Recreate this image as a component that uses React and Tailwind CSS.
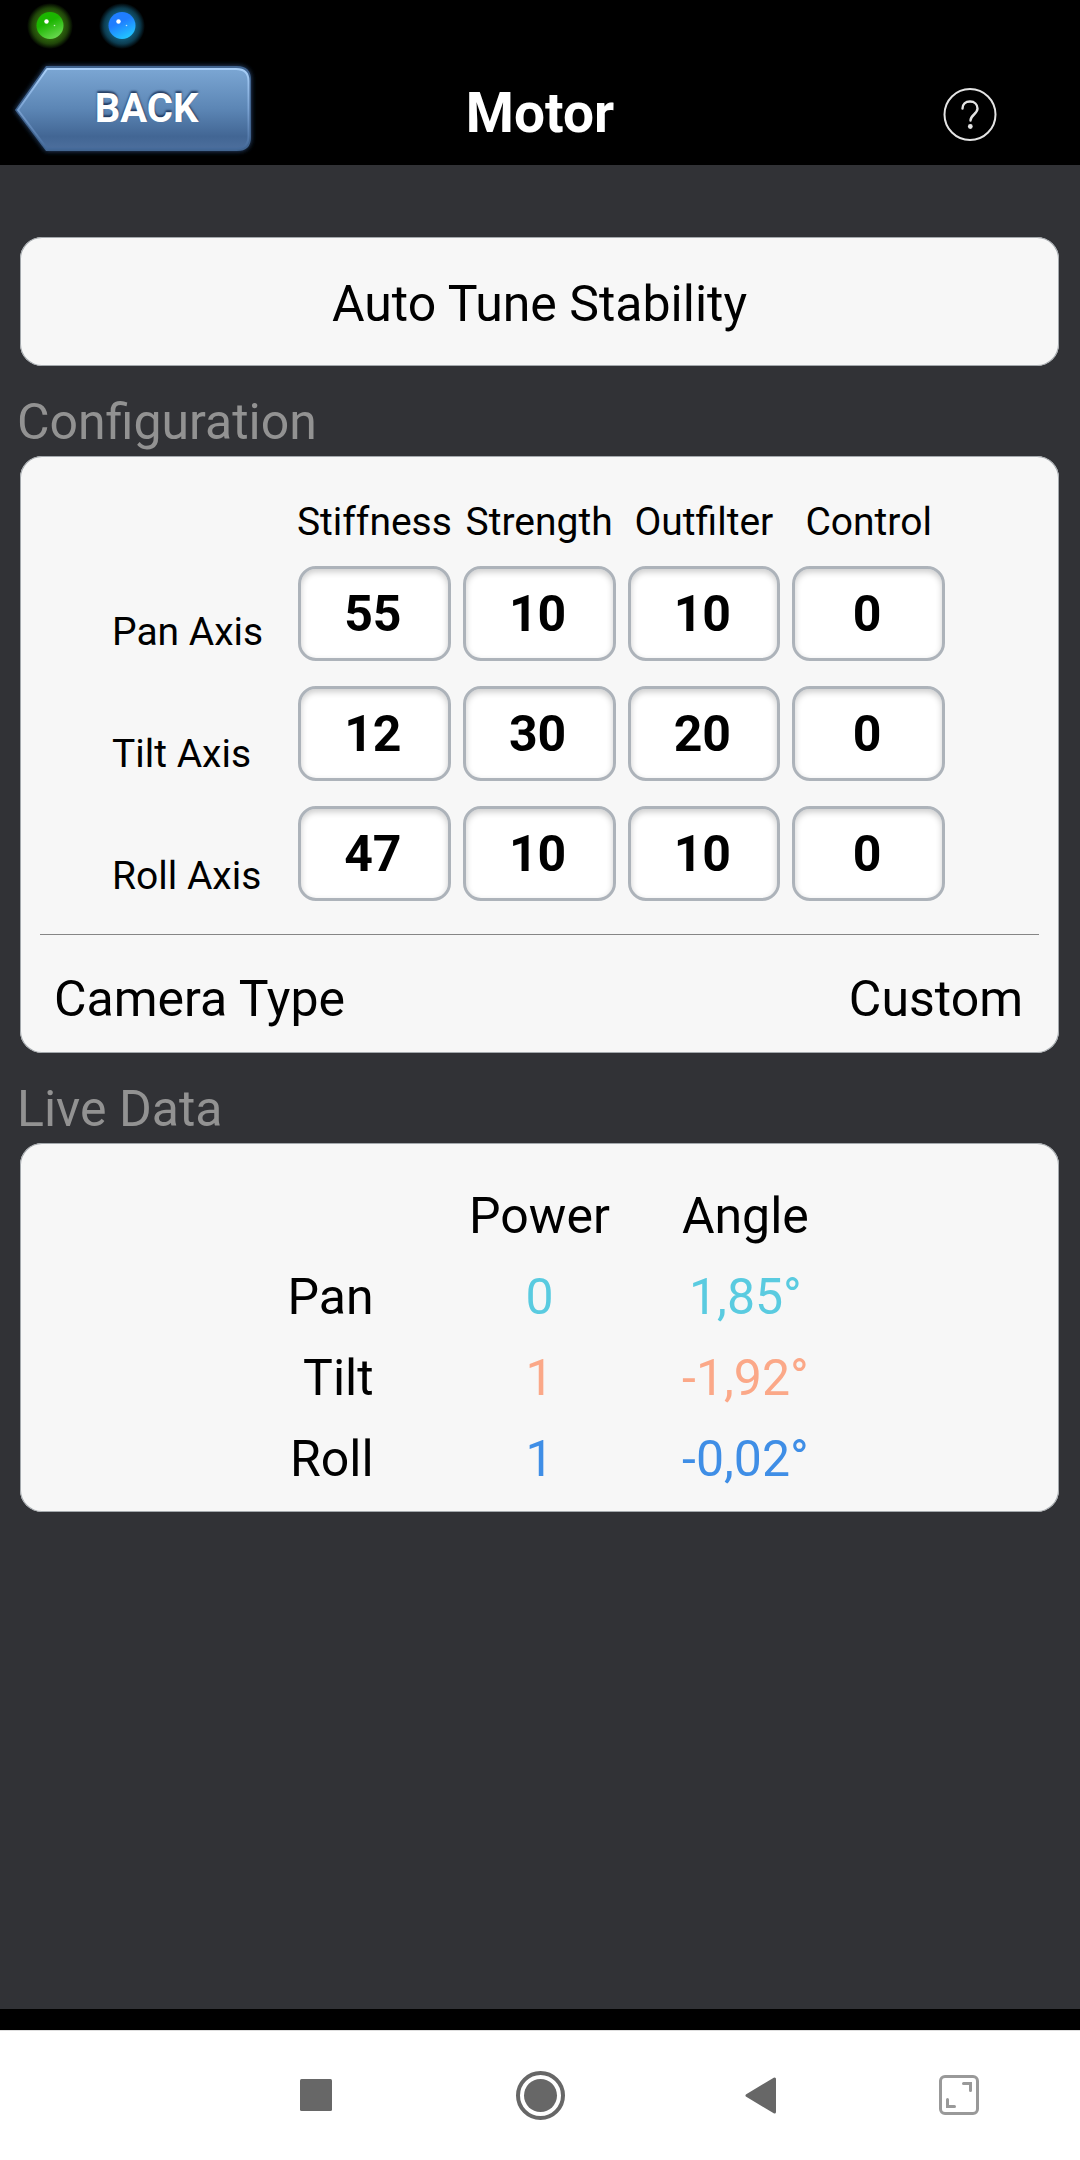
import React, { useState } from "react";

const COLUMNS = ["Stiffness", "Strength", "Outfilter", "Control"];

const AXES = [
  { name: "Pan Axis", values: ["55", "10", "10", "0"] },
  { name: "Tilt Axis", values: ["12", "30", "20", "0"] },
  { name: "Roll Axis", values: ["47", "10", "10", "0"] },
];

const LIVE = [
  { name: "Pan", power: "0", angle: "1,85°", color: "text-[#5acbe0]" },
  { name: "Tilt", power: "1", angle: "-1,92°", color: "text-[#fba888]" },
  { name: "Roll", power: "1", angle: "-0,02°", color: "text-[#3f8ee6]" },
];

function Led({ id, from, to, glow, label }) {
  return (
    <svg className="h-[50px] w-[60px]" viewBox="0 0 60 50" role="img" aria-label={label}>
      <defs>
        <linearGradient id={id + "-fill"} x1="0.3" y1="0.1" x2="0.75" y2="1">
          <stop offset="0.3" stopColor={from} />
          <stop offset="1" stopColor={to} />
        </linearGradient>
        <radialGradient id={id + "-glow"}>
          <stop offset="0.55" stopColor={glow} stopOpacity="0.75" />
          <stop offset="0.78" stopColor={glow} stopOpacity="0.5" />
          <stop offset="1" stopColor={glow} stopOpacity="0" />
        </radialGradient>
      </defs>
      <circle cx="30" cy="26" r="23" fill={`url(#${id}-glow)`} />
      <circle cx="30" cy="25.500" r="13.500" fill={`url(#${id}-fill)`} />
      <circle cx="26.500" cy="21.500" r="2.200" fill="#fff" />
      <circle cx="34.500" cy="25.500" r="0.800" fill="#fff" opacity="0.7" />
    </svg>
  );
}

function BackShape() {
  const shape = "M36 5H227Q241 5 241 19V76Q241 90 227 90H36L5 49Z";
  const inner = "M37 8H226Q238.500 8 238.500 20V75Q238.500 87.500 226 87.500H37L8 49Z";
  return (
    <svg className="h-full w-full [grid-area:1/1]" viewBox="0 0 246 96" aria-hidden="true">
      <defs>
        <linearGradient id="back-fill" x1="0" y1="0" x2="0" y2="1">
          <stop offset="0" stopColor="#7ba6d3" />
          <stop offset="0.5" stopColor="#5c86b5" />
          <stop offset="0.85" stopColor="#426694" />
          <stop offset="1" stopColor="#4c6e9c" />
        </linearGradient>
        <linearGradient id="back-edge" x1="0" y1="0" x2="0" y2="1">
          <stop offset="0" stopColor="#a8cff8" />
          <stop offset="0.5" stopColor="#7ba3d3" />
          <stop offset="1" stopColor="#456a9a" />
        </linearGradient>
        <filter id="back-glow" x="-10%" y="-20%" width="120%" height="140%">
          <feGaussianBlur stdDeviation="2.500" />
        </filter>
      </defs>
      <path d={shape} fill="#2c4d7c" filter="url(#back-glow)" />
      <path d={shape} fill="#41648f" />
      <path d={inner} fill="url(#back-fill)" stroke="url(#back-edge)" strokeWidth="2" strokeLinejoin="round" />
    </svg>
  );
}

function SectionTitle({ id, children }) {
  return (
    <h2 id={id} className="pt-[26px] pb-1 pl-[17px] text-[50px] leading-[60px] text-[#929292]">
      {children}
    </h2>
  );
}

const CARD = "mr-[21px] ml-5 rounded-[22px] bg-[#f7f7f7] shadow-[inset_0_0_0_1px_#a4a9ad]";

export default function App() {
  const [axes, setAxes] = useState(AXES.map((a) => a.values));

  const change = (row, col, value) =>
    setAxes(axes.map((r, i) => (i === row ? r.map((v, j) => (j === col ? value : v)) : r)));

  return (
    <div className="flex min-h-screen flex-col bg-[#313236] font-['Roboto',sans-serif] text-black">
      <header className="bg-black">
        <div className="flex h-[61px] items-start gap-3 pl-5">
          <Led id="led-green" label="Connected" from="#1bb500" to="#6fdc55" glow="#3f8a12" />
          <Led id="led-blue" label="Bluetooth" from="#1f7dff" to="#22ccff" glow="#1878a0" />
        </div>
        <div className="grid h-[104px] grid-cols-[1fr_auto_1fr] items-center pr-[82px] pl-[10px]">
          <button type="button" className="grid h-24 w-[246px] self-start">
            <BackShape />
            <span className="z-10 pt-[18px] pl-[27px] text-center text-[40px] leading-[60px] font-bold text-white [grid-area:1/1] [text-shadow:0_-2px_2px_rgba(20,40,75,0.8)]">
              BACK
            </span>
          </button>
          <h1 className="pl-[72px] text-[55px] leading-[104px] font-bold text-white">Motor</h1>
          <button type="button" aria-label="Help" className="justify-self-end">
            <svg className="size-14" viewBox="0 0 56 56" fill="none" stroke="#e4e4e4" strokeLinecap="round">
              <circle cx="28" cy="29.500" r="25.500" strokeWidth="2" />
              <path d="M20.500 23.500C20.500 19 23.500 16.500 28 16.500C32.500 16.500 35.500 19.500 35.500 23.500C35.500 29 28.500 30 28.500 35.500" strokeWidth="2.400" />
              <circle cx="28.300" cy="41.500" r="2.400" fill="#e4e4e4" stroke="none" />
            </svg>
          </button>
        </div>
      </header>

      <main className="flex flex-1 flex-col pt-[72px]">
        <button type="button" className={CARD + " h-[129px] pt-1 text-[50px] leading-[60px]"}>
          Auto Tune Stability
        </button>

        <SectionTitle id="configuration">Configuration</SectionTitle>
        <section aria-labelledby="configuration" className={CARD + " pt-[42px]"}>
          <div className="flex pr-[114px] pl-[92px] text-[39px] leading-[48px]">
            <div className="flex w-[186px] flex-col gap-[74px] pt-[110px] whitespace-nowrap">
              {AXES.map((axis, row) => (
                <span key={axis.name} id={"axis-" + row}>
                  {axis.name}
                </span>
              ))}
            </div>
            <div className="grid flex-1 grid-cols-4 gap-x-3">
              {COLUMNS.map((name, col) => (
                <span key={name} id={"column-" + col} className="mb-5 flex justify-center whitespace-nowrap">
                  {name}
                </span>
              ))}
              {axes.map((values, row) =>
                values.map((value, col) => (
                  <input
                    key={row + "-" + col}
                    type="text"
                    inputMode="numeric"
                    aria-labelledby={"axis-" + row + " column-" + col}
                    value={value}
                    onChange={(e) => change(row, col, e.target.value)}
                    className={
                      "h-[95px] w-full min-w-0 rounded-[18px] border-[3px] border-[#adb3ba] bg-white pr-[3px] text-center text-[50px] leading-[60px] font-bold shadow-[inset_0_3px_6px_rgba(0,0,0,0.2)] " +
                      (row < 2 ? "mb-[25px]" : "")
                    }
                  />
                ))
              )}
            </div>
          </div>
          <hr className="mx-5 mt-[33px] border-t border-[#868686]" />
          <button
            type="button"
            className="flex h-[118px] w-full items-center justify-between pt-[10px] pr-9 pl-[34px] text-[50px] leading-[60px]"
          >
            <span>Camera Type</span>
            <span>Custom</span>
          </button>
        </section>

        <SectionTitle id="live-data">Live Data</SectionTitle>
        <section aria-labelledby="live-data" className={CARD + " pt-8 pb-[13px]"}>
          <table className="w-full table-fixed text-[50px] leading-[60px]">
            <colgroup>
              <col className="w-[40%]" />
              <col className="w-[20%]" />
              <col className="w-[204px]" />
              <col />
            </colgroup>
            <thead>
              <tr className="h-[81px]">
                <td />
                <th scope="col" className="font-normal">Power</th>
                <th scope="col" className="font-normal">Angle</th>
                <td />
              </tr>
            </thead>
            <tbody>
              {LIVE.map((row) => (
                <tr key={row.name} className="h-[81px]">
                  <th scope="row" className="pr-[62px] text-right font-normal">{row.name}</th>
                  <td className={"text-center " + row.color}>{row.power}</td>
                  <td className={"text-center " + row.color}>{row.angle}</td>
                  <td />
                </tr>
              ))}
            </tbody>
          </table>
        </section>
      </main>

      <footer>
        <div className="h-[21px] bg-black" />
        <nav
          aria-label="System"
          className="grid h-[130px] grid-cols-[204fr_224fr_224fr_224fr_166fr_38fr] items-center border-t border-[#dedede] bg-white"
        >
          <span />
          <button type="button" aria-label="Recent apps" className="justify-self-center">
            <svg className="size-[50px]" viewBox="0 0 50 50">
              <rect x="9" y="8" width="32" height="32" rx="1.500" fill="#676767" />
            </svg>
          </button>
          <button type="button" aria-label="Home" className="justify-self-center">
            <svg className="size-[50px]" viewBox="0 0 50 50">
              <circle cx="25.500" cy="24.500" r="22.500" fill="none" stroke="#676767" strokeWidth="4" />
              <circle cx="25.500" cy="24.500" r="16.500" fill="#676767" />
            </svg>
          </button>
          <button type="button" aria-label="Back" className="justify-self-center">
            <svg className="size-[50px]" viewBox="0 0 50 50">
              <path
                d="M8 24.500L35.500 8V41Z"
                fill="#676767"
                stroke="#676767"
                strokeWidth="3"
                strokeLinejoin="round"
              />
            </svg>
          </button>
          <button type="button" aria-label="Full screen" className="justify-self-center">
            <svg className="size-[50px]" viewBox="0 0 50 50" fill="none" stroke="#999" strokeWidth="3" strokeLinecap="round">
              <rect x="6.500" y="5.500" width="37" height="37" rx="4.500" />
              <path d="M29.500 12.500H36.500V19.500M13.500 28.500V35.500H20.500" />
            </svg>
          </button>
          <span />
        </nav>
      </footer>
    </div>
  );
}
